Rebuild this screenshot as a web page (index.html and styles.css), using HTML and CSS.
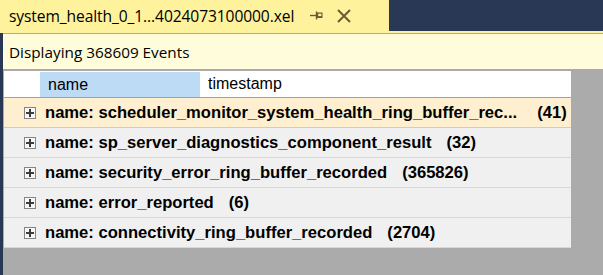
FILE: index.html
```html
<!DOCTYPE html>
<html>
<head>
<meta charset="utf-8">
<link rel="stylesheet" href="styles.css">
</head>
<body>
<div class="tabrow">
  <div class="tab">
    <span class="tab-title">system_health_0_1...4024073100000.xel</span>
    <svg class="pin" width="14" height="12" viewBox="0 0 14 12"><path d="M0 5.5H6" stroke="#6b5b35" stroke-width="1.4"/><path d="M6.5 1.5V9.5" stroke="#6b5b35" stroke-width="1.4"/><rect x="7" y="2.5" width="5.5" height="5.5" fill="#6b5b35"/><rect x="8.2" y="3.7" width="3.2" height="2.4" fill="#fff29d"/></svg>
    <svg class="close" width="14" height="14" viewBox="0 0 14 14"><path d="M1 1L13 13M13 1L1 13" stroke="#6b5b35" stroke-width="2"/></svg>
  </div>
  <div class="well"></div>
</div>
<div class="strip"></div>
<div class="frame">
  <div class="body">
    <div class="info">Displaying 368609 Events</div>
    <div class="gridarea">
      <div class="grid">
        <div class="header">
          <div class="hcell hfirst"></div>
          <div class="hcell hname">name</div>
          <div class="hcell htime">timestamp</div>
        </div>
        <div class="row selected"><span class="plus"></span><span class="label">name: scheduler_monitor_system_health_ring_buffer_rec...</span><span class="count">(41)</span></div>
        <div class="row"><span class="plus"></span><span class="label">name: sp_server_diagnostics_component_result</span><span class="count">(32)</span></div>
        <div class="row"><span class="plus"></span><span class="label">name: security_error_ring_buffer_recorded</span><span class="count">(365826)</span></div>
        <div class="row"><span class="plus"></span><span class="label">name: error_reported</span><span class="count">(6)</span></div>
        <div class="row"><span class="plus"></span><span class="label">name: connectivity_ring_buffer_recorded</span><span class="count">(2704)</span></div>
      </div>
    </div>
  </div>
</div>
</body>
</html>
```
FILE: styles.css
```css
html, body {
  margin: 0;
  padding: 0;
  height: 100%;
}
body {
  background: #293955;
  width: 603px;
  height: 275px;
  overflow: hidden;
  display: flex;
  flex-direction: column;
  font-family: "Open Sans", "Noto Sans", sans-serif;
}
.tabrow {
  display: flex;
  height: 31px;
  flex: none;
}
.tab {
  width: 389px;
  background: #fff29d;
  display: flex;
  align-items: center;
  box-sizing: border-box;
  padding-left: 9px;
}
.tab-title {
  font-size: 15.6px;
  color: #000;
  letter-spacing: -0.1px;
}
.pin {
  margin-left: 16px;
  margin-top: 1px;
}
.close {
  margin-left: 13px;
}
.well {
  flex: 1;
}
.strip {
  height: 2px;
  background: #fff29d;
  flex: none;
}
.frame {
  flex: 1;
  padding-left: 3px;
  display: flex;
}
.body {
  flex: 1;
  background: #ababab;
  display: flex;
  flex-direction: column;
}
.info {
  height: 35px;
  background: #fffcdc;
  border-top: 1px solid #a9a9a9;
  border-bottom: 1px solid #a9a9a9;
  display: flex;
  align-items: center;
  padding-left: 6px;
  font-size: 15.3px;
  color: #000;
  flex: none;
}
.gridarea {
  padding-top: 1px;
  padding-left: 1px;
}
.grid {
  width: 567px;
  font-family: "Liberation Sans", Arial, sans-serif;
}
.header {
  display: flex;
  height: 26px;
  background: #fff;
  border-bottom: 1px solid #a0a0a0;
}
.hcell {
  font-size: 16px;
  display: flex;
  align-items: center;
  color: #000;
}
.hfirst {
  width: 36px;
}
.hname {
  width: 152px;
  padding-left: 8px;
  background: #bddbf4;
  margin-top: 1px;
}
.htime {
  padding-left: 8px;
}
.row {
  height: 29px;
  background: #f0f0f0;
  border-bottom: 1px solid #d3d9e3;
  display: flex;
  align-items: center;
  font-weight: bold;
  font-size: 16.6px;
  color: #000;
  white-space: nowrap;
}
.row.selected {
  background: #fdefcf;
  border-bottom: 1px solid #edc889;
}
.plus {
  width: 10px;
  height: 10px;
  border: 1px solid #858585;
  margin-left: 20px;
  margin-right: 9px;
  position: relative;
  background: #f6f6f6;
  flex: none;
}
.plus::before {
  content: "";
  position: absolute;
  left: 1px;
  top: 4px;
  width: 8px;
  height: 2px;
  background: #3c3c3c;
}
.plus::after {
  content: "";
  position: absolute;
  left: 4px;
  top: 1px;
  width: 2px;
  height: 8px;
  background: #3c3c3c;
}
.count {
  margin-left: 15px;
}
.selected .count {
  margin-left: 20px;
}
```
